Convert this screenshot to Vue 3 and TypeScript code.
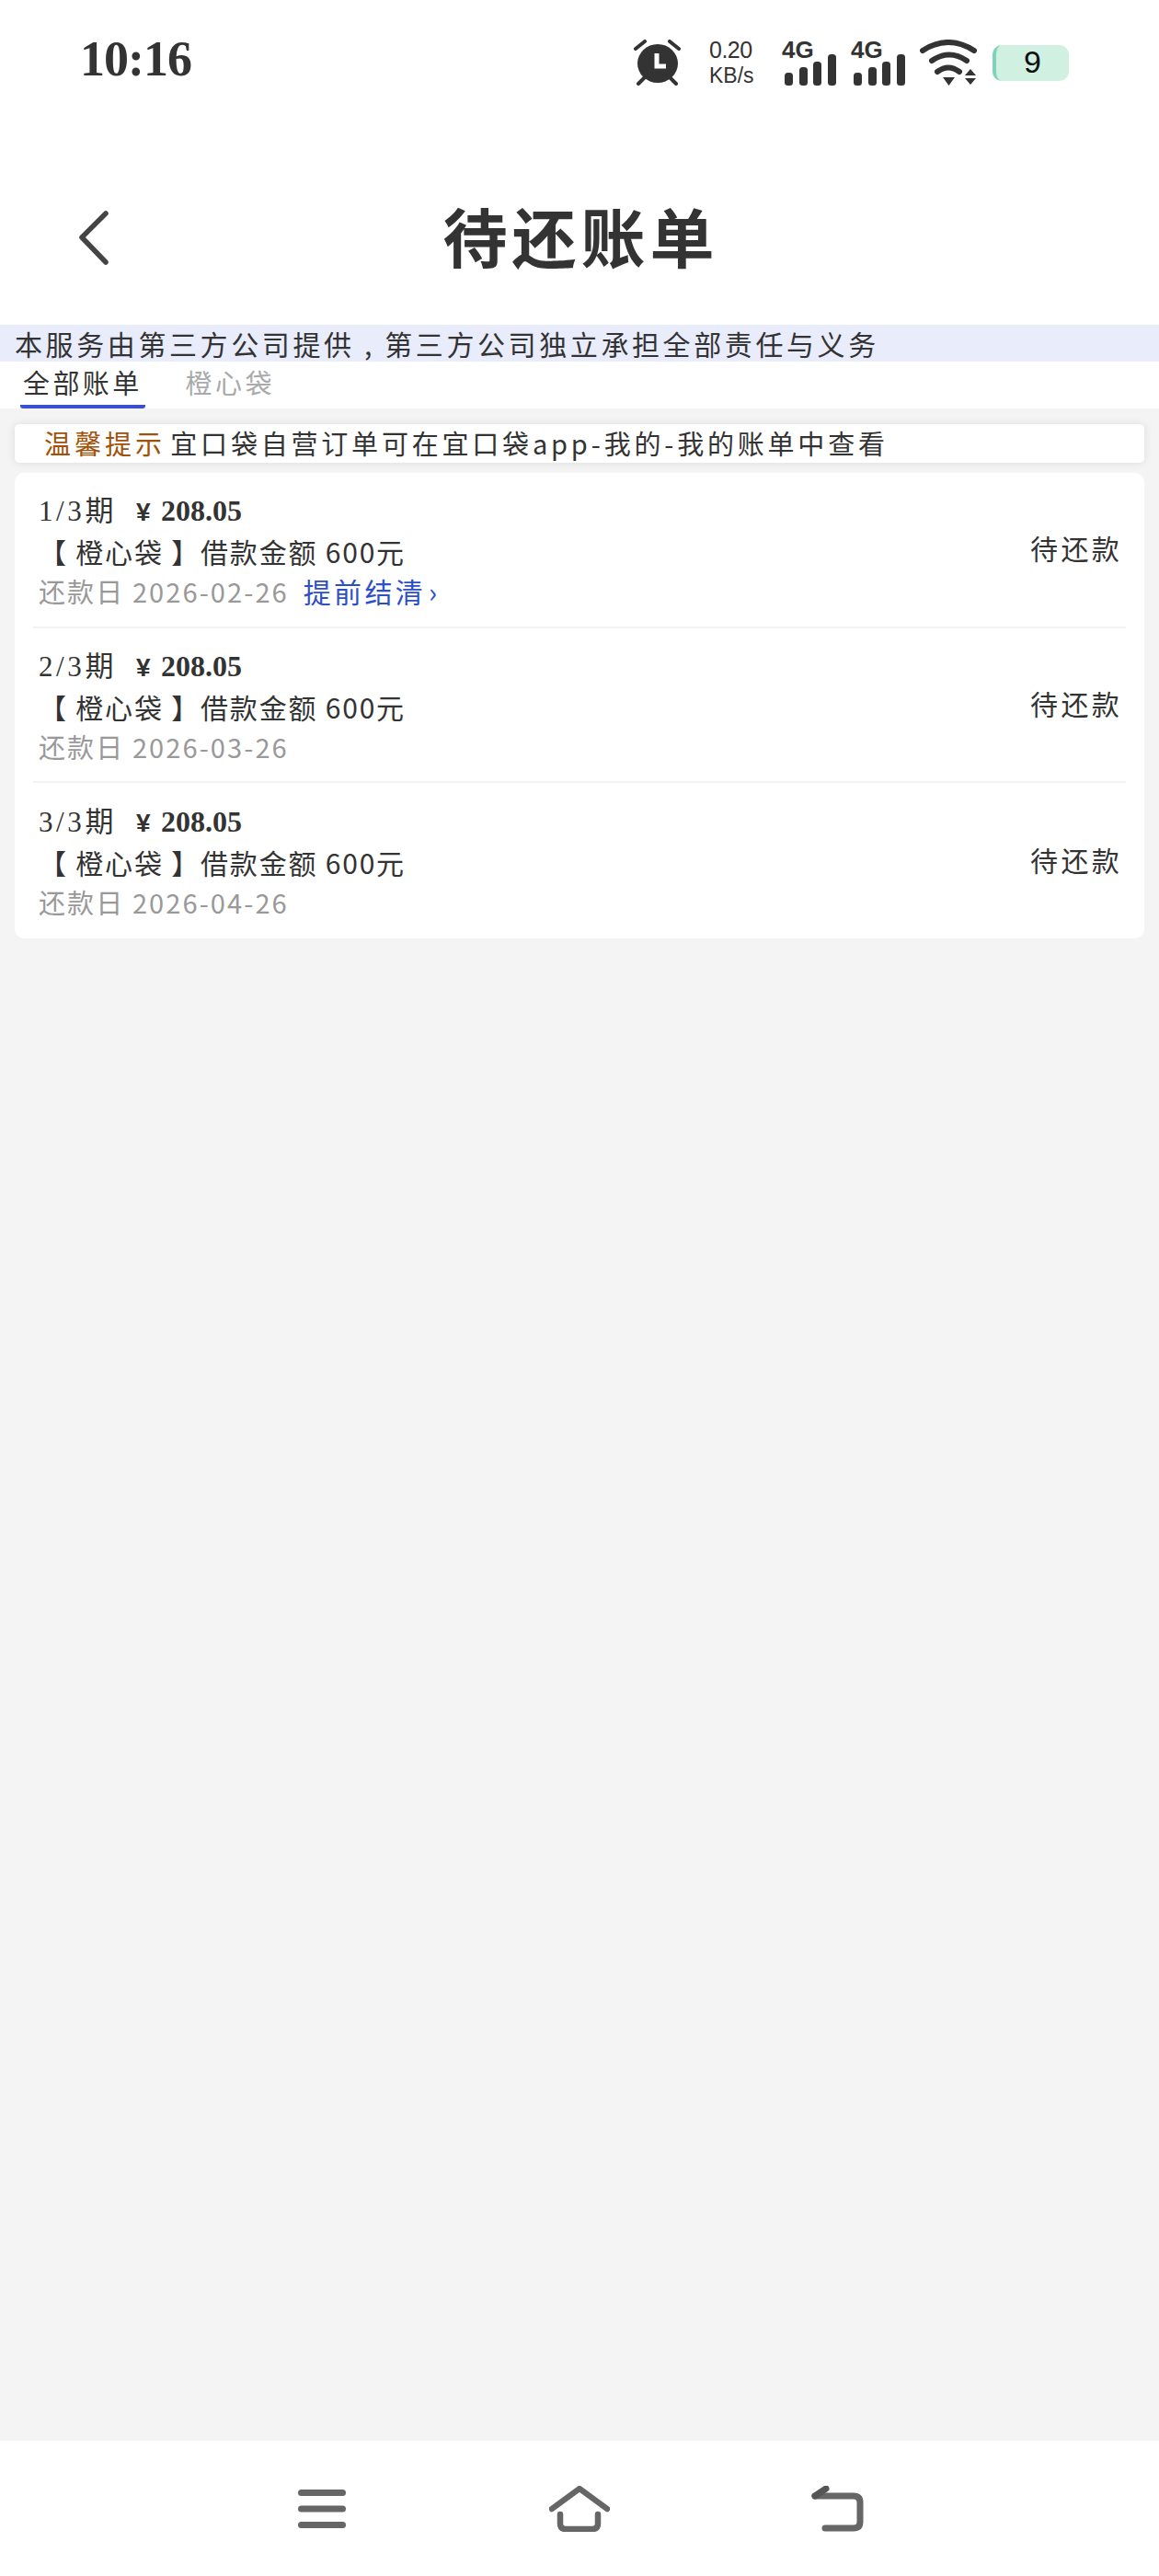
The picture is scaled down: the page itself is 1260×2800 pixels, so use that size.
<script setup lang="ts">
interface Bill {
  term: string
  amount: string
  due: string
  early: boolean
}

const bills: Bill[] = [
  { term: '1/3期', amount: '208.05', due: '2026-02-26', early: true },
  { term: '2/3期', amount: '208.05', due: '2026-03-26', early: false },
  { term: '3/3期', amount: '208.05', due: '2026-04-26', early: false },
]
const bars = [
  { x: 3, y: 36, h: 14 },
  { x: 19, y: 30, h: 20 },
  { x: 34, y: 24, h: 26 },
  { x: 50, y: 16, h: 34 },
]
</script>

<template>
  <div class="page">
    <div class="statusbar">
      <span class="time">10:16</span>
      <div class="status-icons">
        <svg class="alarm" width="51" height="50" viewBox="0 0 51 50">
          <ellipse cx="26" cy="26" rx="22" ry="21" fill="#333" />
          <path d="M2 10 12 2M39 2 49 10M5 48 12 41M39 41 46 48" stroke="#333" stroke-width="4" stroke-linecap="round" fill="none" />
          <path d="M25 15V29H35" stroke="#fff" stroke-width="5" fill="none" />
        </svg>
        <div class="speed">
          <span class="speed-num">0.20</span>
          <span class="speed-unit">KB/s</span>
        </div>
        <div v-for="n in 2" :key="n" class="signal">
          <span class="net">4G</span>
          <svg width="59" height="50" viewBox="0 0 59 50">
            <rect v-for="b in bars" :key="b.x" :x="b.x" :y="b.y" width="9" :height="b.h" rx="3.5" fill="#333" />
          </svg>
        </div>
        <svg class="wifi" width="62" height="50" viewBox="0 0 62 50">
          <path d="M3 12Q31-6 59 12M13 23Q32 10 51 23M19 35Q31 26 43 35" stroke="#333" stroke-width="6" stroke-linecap="round" fill="none" />
          <path d="M25 41H38L31.500 50ZM49 39 55 32 61 39ZM49 42H61L55 49Z" fill="#333" />
        </svg>
        <div class="battery">9</div>
      </div>
    </div>

    <header class="header">
      <svg class="back" width="32" height="60" viewBox="0 0 32 60">
        <path d="M29 3 3 29 29 56" stroke="#444" stroke-width="5.500" stroke-linecap="round" stroke-linejoin="round" fill="none" />
      </svg>
      <h1 class="title">待还账单</h1>
    </header>

    <div class="notice">本服务由第三方公司提供 , 第三方公司独立承担全部责任与义务</div>

    <div class="tabs">
      <div class="tab active">全部账单</div>
      <div class="tab">橙心袋</div>
    </div>

    <main class="content">
      <div class="tip"><em>温馨提示</em> 宜口袋自营订单可在宜口袋app-我的-我的账单中查看</div>
      <div class="card">
        <div v-for="bill in bills" :key="bill.term" class="row">
          <div class="info">
            <div class="line-top">
              <span class="term">{{ bill.term }}</span>
              <span class="yen">¥</span>
              <b class="amount">{{ bill.amount }}</b>
            </div>
            <div class="line-loan">【 橙心袋 】借款金额 600元</div>
            <div class="line-due">
              <span class="due">还款日 {{ bill.due }}</span>
              <span v-if="bill.early" class="early">提前结清<i>›</i></span>
            </div>
          </div>
          <div class="state">待还款</div>
        </div>
      </div>
    </main>

    <nav class="navbar">
      <div class="nav-item">
        <svg width="52" height="42" viewBox="0 0 52 42">
          <path d="M3.500 3.500H48.500M3.500 21H48.500M3.500 38.500H48.500" stroke="#666" stroke-width="7" stroke-linecap="round" fill="none" />
        </svg>
      </div>
      <div class="nav-item">
        <svg width="66" height="50" viewBox="0 0 66 50">
          <path d="M3 25 33 3 63 25M12 31V41Q12 47 18 47H47Q53 47 53 41V31" stroke="#666" stroke-width="6.500" stroke-linecap="round" stroke-linejoin="round" fill="none" />
        </svg>
      </div>
      <div class="nav-item">
        <svg width="57" height="50" viewBox="0 0 57 50">
          <path d="M4 11H46Q53 11 53 18V39Q53 46 46 46H15" stroke="#666" stroke-width="7" stroke-linecap="round" fill="none" />
          <path d="M4 11 16 3" stroke="#555" stroke-width="7" stroke-linecap="round" fill="none" />
        </svg>
      </div>
    </nav>
  </div>
</template>

<style scoped>
.page {
  display: flex;
  flex-direction: column;
  width: 1260px;
  height: 2800px;
  overflow: hidden;
  background: #fff;
  color: #333;
  font-family: "Noto Sans CJK SC", "Liberation Sans", sans-serif;
}

.statusbar {
  display: flex;
  align-items: center;
  justify-content: space-between;
  height: 136px;
  padding: 0 98px 0 87px;
  box-sizing: border-box;
}

.time {
  font-family: "Liberation Serif", serif;
  font-size: 54px;
  font-weight: 700;
  letter-spacing: -1px;
  line-height: 1;
  margin-top: -8px;
}

.status-icons {
  display: flex;
  align-items: center;
}

.speed {
  display: flex;
  flex-direction: column;
  width: 50px;
  margin: 0 29px 0 31px;
  font-family: "Liberation Sans", sans-serif;
  line-height: 1;
}

.speed-num {
  font-size: 25px;
  letter-spacing: -0.5px;
  margin-bottom: 4px;
}

.speed-unit {
  font-size: 23px;
}

.signal {
  position: relative;
  width: 59px;
  height: 50px;
  margin-right: 16px;
}

.net {
  position: absolute;
  top: -2px;
  left: 0;
  font-family: "Liberation Sans", sans-serif;
  font-size: 26px;
  font-weight: 700;
  line-height: 26px;
}

.battery {
  width: 83px;
  height: 39px;
  margin-left: 17px;
  box-sizing: border-box;
  border-left: 4px solid #7fd3b8;
  border-radius: 10px;
  background: #d0f0e2;
  color: #111;
  font-family: "Liberation Sans", sans-serif;
  font-size: 34px;
  line-height: 37px;
  text-align: center;
}

.header {
  display: grid;
  grid-template-columns: 1fr auto 1fr;
  align-items: center;
  height: 217px;
  padding-top: 22px;
  box-sizing: border-box;
}

.back {
  margin: 6px 0 0 86px;
}

.title {
  margin: 0 0 0 3px;
  font-size: 70px;
  font-weight: 700;
  letter-spacing: 5px;
  line-height: 1;
}

.notice {
  height: 40px;
  padding-left: 16px;
  background: #e9ecfb;
  font-size: 30px;
  letter-spacing: 3.600px;
  line-height: 40px;
  white-space: nowrap;
}

.tabs {
  display: flex;
  height: 51px;
  padding-left: 22px;
  gap: 41px;
}

.tab {
  height: 51px;
  box-sizing: border-box;
  padding: 0 3px;
  color: #aaa;
  font-size: 29px;
  letter-spacing: 3.400px;
  line-height: 44px;
}

.tab.active {
  color: #333;
  border-bottom: 4px solid #3a50d0;
  border-radius: 0 0 3px 3px;
}

.content {
  flex: 1;
  padding: 17px 16px 0;
  background: #f4f4f4;
}

.tip {
  height: 42px;
  padding-left: 32px;
  border-radius: 5px;
  background: #fff;
  box-shadow: 0 0 10px rgba(0, 0, 0, 0.1);
  font-size: 29px;
  letter-spacing: 3.800px;
  line-height: 40px;
  white-space: nowrap;
}

.tip em {
  margin-right: -5px;
  color: #a0520a;
  font-style: normal;
  letter-spacing: 4px;
}

.card {
  margin-top: 11px;
  padding: 0 20px;
  border-radius: 10px;
  background: #fff;
}

.row {
  display: flex;
  align-items: center;
  justify-content: space-between;
  height: 168.700px;
  box-sizing: border-box;
  padding: 0 6px;
  border-bottom: 2px solid #f3f3f3;
}

.row:last-child {
  border-bottom: 0;
}

.line-top {
  display: flex;
  align-items: baseline;
  height: 44px;
  font-family: "Liberation Serif", "Noto Sans CJK SC", serif;
  font-size: 31px;
  line-height: 44px;
}

.term {
  width: 106px;
  letter-spacing: 3.600px;
}

.yen {
  width: 27px;
  font-family: "Liberation Sans", sans-serif;
  font-size: 28px;
  font-weight: 700;
}

.amount {
  font-size: 32px;
}

.line-loan {
  font-size: 30px;
  letter-spacing: 1.800px;
  line-height: 44px;
}

.line-due {
  display: flex;
  gap: 16px;
  margin-top: 1px;
  font-size: 29px;
  line-height: 40px;
}

.due {
  color: #999;
  letter-spacing: 2.100px;
}

.early {
  color: #2d4fc8;
  font-size: 30px;
  letter-spacing: 3.300px;
}

.early i {
  margin-left: 3px;
  font-style: normal;
}

.state {
  font-size: 30px;
  letter-spacing: 3.300px;
  line-height: 44px;
  margin: -4px -2px 0 0;
}

.navbar {
  display: flex;
  justify-content: center;
  height: 147px;
  background: #fff;
}

.nav-item {
  display: flex;
  align-items: center;
  justify-content: center;
  width: 280px;
  height: 147px;
}
</style>
